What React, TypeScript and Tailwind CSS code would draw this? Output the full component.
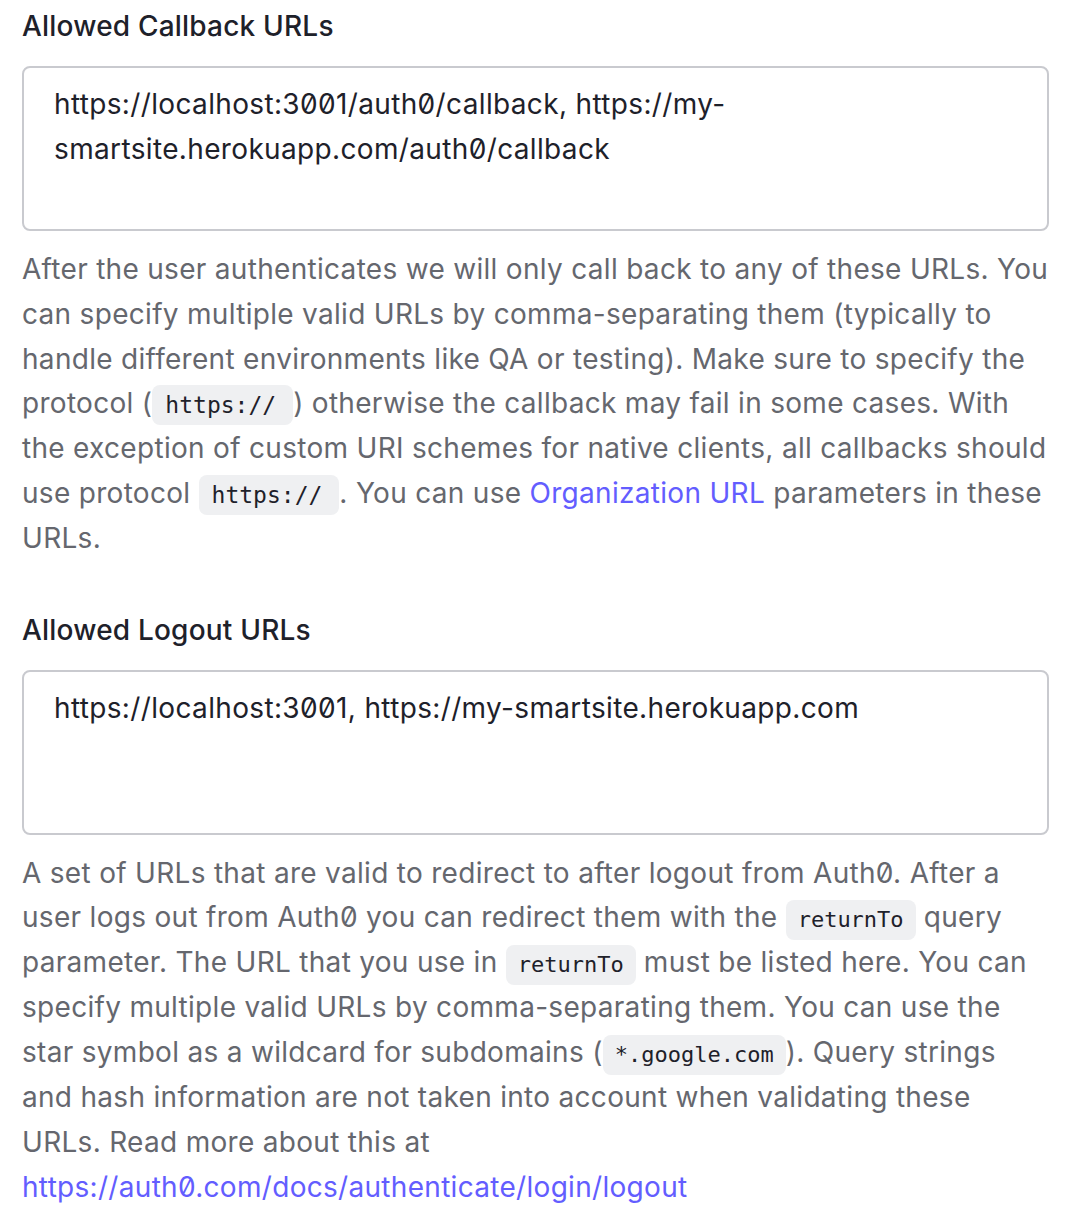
const Code = ({ children, wide }: { children: React.ReactNode; wide?: boolean }) => (
  <code
    className={
      "inline-block h-[40px] rounded-lg bg-[#eff0f2] align-baseline font-['DejaVu_Sans_Mono',monospace] leading-[40px] tracking-normal text-[#1e212a] " +
      (wide ? "pl-[13px] pr-[17px] text-[23px]" : "px-[12px] text-[22px]")
    }
  >
    {children}
  </code>
);

const Field = ({
  label,
  value,
  children,
}: {
  label: string;
  value: string;
  children: React.ReactNode;
}) => (
  <div>
    <label className="block text-[28px] leading-[36px] font-medium tracking-[0.2px] text-[#1e212a]">{label}</label>
    <textarea
      readOnly
      value={value}
      className="mt-[22px] block h-[165px] w-full resize-none rounded-lg border-2 border-[#c9cacf] bg-white px-[30px] pt-[14px] text-[28px] leading-[45px] tracking-[0.35px] text-[#1e212a] outline-none"
    />
    <p className="mt-4 text-[28px] leading-[44.8px] tracking-[0.3px] text-[#65676e]">{children}</p>
  </div>
);

export default function App() {
  return (
    <div className="min-h-screen bg-white font-['Inter',sans-serif] [font-feature-settings:'zero']">
      <div className="w-[1027px] pl-[22px] pt-2 box-content flex flex-col gap-[51px]">
        <Field
          label="Allowed Callback URLs"
          value="https://localhost:3001/auth0/callback, https://my-smartsite.herokuapp.com/auth0/callback"
        >
          After the user authenticates we will only call back to any of these URLs. You can specify
          multiple valid URLs by comma-separating them (typically to handle different environments
          like QA or testing). Make sure to specify the protocol (<Code wide>https://</Code>) otherwise
          the callback may fail in some cases. With the exception of custom URI schemes for native
          clients, all callbacks should use protocol <Code wide>https://</Code>. You can use{" "}
          <a href="#" className="text-[#635dff]">
            Organization URL
          </a>{" "}
          parameters in these URLs.
        </Field>
        <Field label="Allowed Logout URLs" value="https://localhost:3001, https://my-smartsite.herokuapp.com">
          A set of URLs that are valid to redirect to after logout from Auth0. After a user logs out
          from Auth0 you can redirect them with the <Code>returnTo</Code> query parameter. The URL
          that you use in <Code>returnTo</Code> must be listed here. You can specify multiple valid
          URLs by comma-separating them. You can use the star symbol as a wildcard for subdomains (
          <Code>*.google.com</Code>). Query strings and hash information are not taken into account
          when validating these URLs. Read more about this at{" "}
          <a href="#" className="text-[#635dff]">
            https://auth0.com/docs/authenticate/login/logout
          </a>
        </Field>
      </div>
    </div>
  );
}
